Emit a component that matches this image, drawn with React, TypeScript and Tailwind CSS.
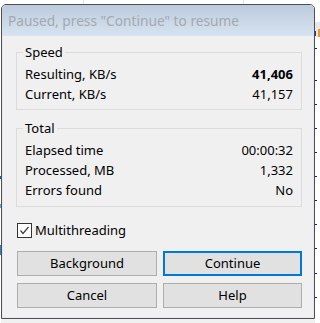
import React from "react";

const font = { fontFamily: '"Noto Sans", "Open Sans", sans-serif' };

type Row = { label: string; value: string; bold?: boolean };

const speedRows: Row[] = [
  { label: "Resulting, KB/s", value: "41,406", bold: true },
  { label: "Current, KB/s", value: "41,157" },
];

const totalRows: Row[] = [
  { label: "Elapsed time", value: "00:00:32" },
  { label: "Processed, MB", value: "1,332" },
  { label: "Errors found", value: "No" },
];

function Group({ title, rows, className }: { title: string; rows: Row[]; className: string }) {
  return (
    <fieldset className={`border border-[#dcdcdc] ${className}`}>
      <legend className="ml-[6px] px-[2px] text-[13px] leading-[16px] text-black">{title}</legend>
      <div className="pt-[4px]">
        {rows.map((r) => (
          <div key={r.label} className="flex justify-between h-[20px] leading-[20px] pl-[8px] pr-[8px] text-[13px] text-black">
            <span>{r.label}</span>
            <span className={r.bold ? "font-bold" : ""}>{r.value}</span>
          </div>
        ))}
      </div>
    </fieldset>
  );
}

function Button({ label, focused }: { label: string; focused?: boolean }) {
  return (
    <button
      className={`h-[25px] bg-[#e1e1e1] text-[13px] text-black leading-none ${
        focused ? "border-2 border-[#0078d7]" : "border border-[#adadad]"
      }`}
    >
      {label}
    </button>
  );
}

const ticks = [48, 80, 104, 128, 152, 176, 200, 224, 248, 273, 297];

export default function App() {
  return (
    <div className="w-[320px] h-[323px] bg-white flex overflow-hidden" style={font}>
      {/* left edge of what lies behind the dialog */}
      <div className="w-[1px] relative">
        <div className="absolute top-[176px] h-[3px] w-[1px] bg-[#1f5fae]" />
        <div className="absolute top-[204px] h-[4px] w-[1px] bg-[#63a6e6]" />
        <div className="absolute top-[245px] h-[10px] w-[1px] bg-[#3b7bcc]" />
      </div>

      <div className="w-[314px] flex flex-col">
        <div className="h-[4px] flex">
          <div className="w-[82px]" />
          <div className="w-[1px] bg-[#e2e2e2]" />
          <div className="w-[159px]" />
          <div className="w-[1px] bg-[#e2e2e2]" />
        </div>

        {/* dialog */}
        <div className="h-[315px] border border-[#4f4f4f] rounded-t-[5px] overflow-hidden flex flex-col">
          <div className="h-[31px] shrink-0 bg-gradient-to-b from-[#bccbdc] to-[#d7e3f0] pl-[6px] pt-[1px] flex items-center">
            <span className="text-[13.7px] text-[#a3a9b0] whitespace-nowrap">
              Paused, press "Continue" to resume
            </span>
          </div>

          <div className="flex-1 bg-[#f0f0f0] border-x border-b border-[#e2e9f1] pl-[13px] pr-[11px] pt-[8px]">
            <Group title="Speed" rows={speedRows} className="pb-[5px]" />
            <Group title="Total" rows={totalRows} className="mt-[10px] pb-[6px]" />

            <label className="mt-[16px] ml-[1px] flex items-center h-[15px] gap-[3px] text-[13px] text-black">
              <span className="w-[15px] h-[15px] border border-[#333333] bg-white flex items-center justify-center">
                <svg width="13" height="13" viewBox="0 0 13 13">
                  <polyline points="2.5,6.5 5,9.5 10.5,3" fill="none" stroke="#3c3c3c" strokeWidth="1.2" />
                </svg>
              </span>
              Multithreading
            </label>

            <div className="mt-[13px] ml-[1px] grid grid-cols-[140px_139px] gap-x-[6px] gap-y-[7px]">
              <Button label="Background" />
              <Button label="Continue" focused />
              <Button label="Cancel" />
              <Button label="Help" />
            </div>
          </div>
        </div>

        <div className="h-[4px] bg-[#f0f0f0]" />
      </div>

      {/* right edge of the window behind */}
      <div className="w-[5px] relative">
        <div className="absolute top-[22px] left-0 w-[5px] h-[15px] bg-[#e8e8e8]" />
        <div className="absolute top-[31px] left-0 w-[1px] h-[5px] bg-[#2a3a8a]" />
        <div className="absolute top-[29px] left-[3px] w-[2px] h-[8px] bg-[#e39a3b]" />
        {ticks.map((t) => (
          <div key={t} className="absolute left-0 w-[2px] h-[1px] bg-[#1d1d6b]" style={{ top: t }} />
        ))}
      </div>
    </div>
  );
}
